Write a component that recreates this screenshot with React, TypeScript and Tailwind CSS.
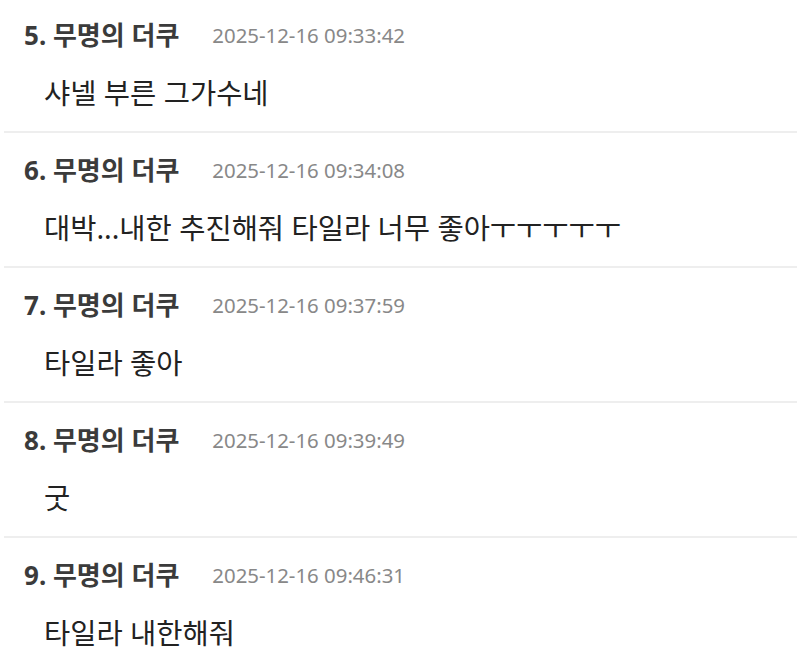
import React from 'react';

interface Comment {
  no: number;
  author: string;
  date: string;
  body: string;
}

const comments: Comment[] = [
  { no: 5, author: '무명의 더쿠', date: '2025-12-16 09:33:42', body: '샤넬 부른 그가수네' },
  { no: 6, author: '무명의 더쿠', date: '2025-12-16 09:34:08', body: '대박...내한 추진해줘 타일라 너무 좋아ㅜㅜㅜㅜㅜ' },
  { no: 7, author: '무명의 더쿠', date: '2025-12-16 09:37:59', body: '타일라 좋아' },
  { no: 8, author: '무명의 더쿠', date: '2025-12-16 09:39:49', body: '굿' },
  { no: 9, author: '무명의 더쿠', date: '2025-12-16 09:46:31', body: '타일라 내한해줘' },
];

const CommentRow: React.FC<{ c: Comment }> = ({ c }) => (
  <li className="ml-1 border-b-2 border-[#eeeeee] pt-[22px] pb-[23px]">
    <div className="flex h-[30px] items-center pl-5">
      <span className="text-[26px] font-bold leading-[30px] text-[#3b3b3b]">
        {c.no}. {c.author}
      </span>
      <span className="ml-[33px] text-[20.4px] leading-[30px] text-[#888888]">{c.date}</span>
    </div>
    <div className="mt-[28px] flex h-[30px] items-center pl-10">
      <span className="text-[28.5px] leading-[30px] whitespace-nowrap text-[#222222]">{c.body}</span>
    </div>
  </li>
);

export default function App() {
  return (
    <div
      className="w-[797px] h-[665px] overflow-hidden bg-white"
      style={{ fontFamily: '"Noto Sans", "Noto Sans CJK KR", sans-serif' }}
    >
      <ul className="-mt-[2px]">
        {comments.map((c) => (
          <CommentRow key={c.no} c={c} />
        ))}
      </ul>
    </div>
  );
}
